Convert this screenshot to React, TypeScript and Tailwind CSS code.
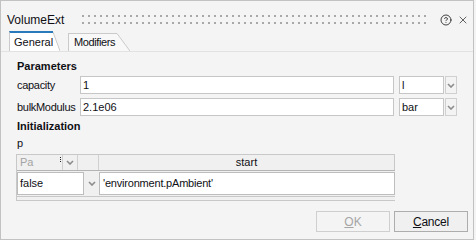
import { X, CircleHelp } from "lucide-react";

function Chevron() {
  return (
    <svg width="8" height="5" viewBox="0 0 8 5">
      <polyline points="1,1 4,4 7,1" fill="none" stroke="#8c8c8c" strokeWidth="1.6" />
    </svg>
  );
}

function Grip() {
  return (
    <svg width="348" height="9" className="shrink-0">
      <defs>
        <pattern id="grip" width="6" height="7" patternUnits="userSpaceOnUse">
          <rect x="0" y="0" width="2" height="2" fill="#a8a8a8" />
        </pattern>
      </defs>
      <rect x="0" y="0" width="348" height="9" fill="url(#grip)" />
    </svg>
  );
}

function Select({ value }: { value: string }) {
  return (
    <div className="flex gap-[1px] ml-[5px]">
      <div className="w-[45px] h-[18px] bg-white border border-[#c6c6c6] pl-[2px] leading-[16px]">{value}</div>
      <div className="w-[12px] h-[18px] border border-[#d0d0d0] bg-[#f3f3f3] flex items-center justify-center">
        <Chevron />
      </div>
    </div>
  );
}

function ParamRow({ label, value, unit }: { label: string; value: string; unit: string }) {
  return (
    <div className="flex items-center h-[18px]">
      <div className="w-[63px] tracking-[-0.3px]">{label}</div>
      <div className="w-[314px] h-[18px] bg-white border border-[#c6c6c6] pl-[2px] leading-[16px]">{value}</div>
      <Select value={unit} />
    </div>
  );
}

export default function App() {
  return (
    <div className="w-[476px] h-[240px] bg-[#f4f4f4] text-[11px] text-[#0f0f14] font-['Liberation_Sans',Arial,sans-serif]">
      <div className="w-[474px] h-[240px] border border-[#c2c2c2] flex flex-col">
        {/* title bar */}
        <div className="h-[30px] pt-[7px] pl-[6px] flex items-center shrink-0">
          <span className="text-[12px] w-[75px]">VolumeExt</span>
          <Grip />
          <CircleHelp size={12} strokeWidth={1.7} className="ml-[10px] text-[#222]" />
          <X size={12} strokeWidth={1.4} className="ml-[5px] text-[#222]" />
        </div>

        {/* tabs */}
        <div className="h-[21px] flex items-end pl-[8px] border-b border-[#e2e2e2] shrink-0">
          <div className="flex h-[20px]">
            <div className="w-[44px] bg-white border-t-2 border-t-[#2a79bb] border-l border-l-[#cacaca] pl-[4px] leading-[18px]">
              General
            </div>
            <svg width="7" height="20">
              <polygon points="0,0 0,20 7,20" fill="#ffffff" />
              <line x1="0" y1="1" x2="7" y2="20" stroke="#cacaca" />
            </svg>
          </div>
          <div className="flex h-[18px] ml-[8px]">
            <div className="w-[49px] bg-[#f8f8f8] border-t border-l border-[#cacaca] pl-[5px] leading-[17px] tracking-[-0.4px]">
              Modifiers
            </div>
            <svg width="13" height="18">
              <polygon points="0,0 0,18 13,18" fill="#f8f8f8" />
              <line x1="0" y1="0.5" x2="13" y2="18" stroke="#cacaca" />
            </svg>
          </div>
        </div>

        {/* content */}
        <div className="pl-[16px] flex flex-col">
          <div className="mt-[8px] font-bold leading-[13px]">Parameters</div>
          <div className="mt-[3px] flex flex-col gap-[4px]">
            <ParamRow label="capacity" value="1" unit="l" />
            <ParamRow label="bulkModulus" value="2.1e06" unit="bar" />
          </div>
          <div className="mt-[4px] font-bold leading-[13px]">Initialization</div>
          <div className="mt-[4px] leading-[13px]">p</div>

          {/* table */}
          <div className="mt-[4px] w-[379px] -ml-[1px] border-l border-b border-[#c8c8c8] bg-[#f0f0f0]">
            <div className="flex h-[17px] border-t border-[#c8c8c8] border-b border-b-[#b4b4b4]">
              <div className="relative w-[46px] border-r border-[#d0d0d0] pl-[3px] leading-[15px] text-[#a3a3a3]">
                Pa
                <span className="absolute right-[1px] top-[2px] w-[1px] h-[5px] border-l border-dotted border-[#222]" />
              </div>
              <div className="w-[15px] border-r border-[#d0d0d0] flex items-center justify-center">
                <Chevron />
              </div>
              <div className="w-[21px] border-r border-[#d0d0d0]" />
              <div className="w-[296px] border-r border-[#c8c8c8] text-center leading-[15px]">start</div>
            </div>
            <div className="flex h-[25px] py-[1px]">
              <div className="w-[67px] bg-white border border-[#bdbdbd] pl-[2px] leading-[21px]">false</div>
              <div className="w-[15px] flex items-center justify-center">
                <Chevron />
              </div>
              <div className="w-[296px] bg-white border border-[#bdbdbd] pl-[3px] leading-[21px] tracking-[-0.2px]">
                'environment.pAmbient'
              </div>
            </div>
            <div className="h-[4px] border-t border-[#c8c8c8]" />
          </div>
        </div>

        {/* buttons */}
        <div className="mt-[10px] flex justify-end gap-[4px] pr-[5px]">
          <div className="w-[74px] h-[21px] border border-[#cfcfcf] text-[#a6a6a6] flex items-center justify-center text-[12px]">
            <span><span className="underline">O</span>K</span>
          </div>
          <div className="w-[74px] h-[21px] border border-[#adadad] bg-[#f0f0f0] flex items-center justify-center text-[12px] tracking-[-0.2px]">
            <span><span className="underline">C</span>ancel</span>
          </div>
        </div>
      </div>
    </div>
  );
}
